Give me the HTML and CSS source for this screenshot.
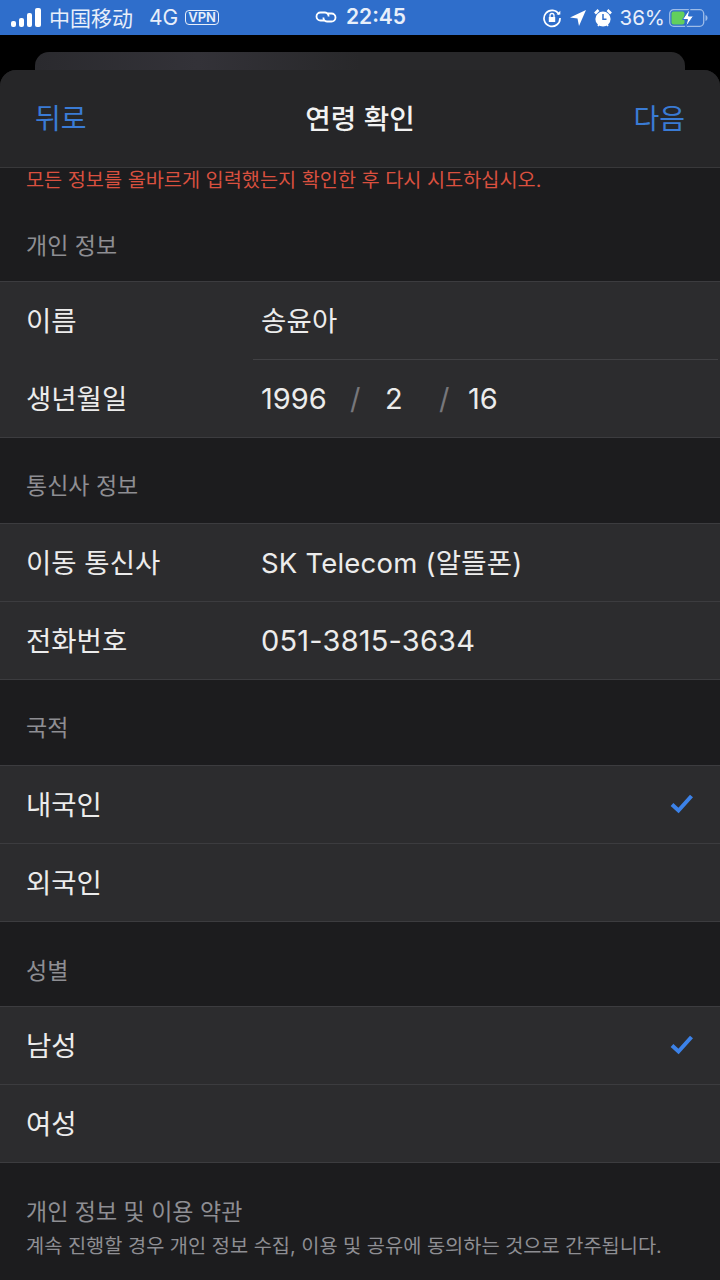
FILE: index.html
```html
<!DOCTYPE html>
<html lang="ko">
<head>
	<meta charset="UTF-8">
	<title>연령 확인</title>
	<link rel="stylesheet" href="styles.css">
</head>
<body>
	<div class="status">
		<div class="status_left">
			<svg class="signal" width="32" height="20" viewBox="0 0 32 20"><rect x="0" y="13" width="5" height="6" rx="2" fill="#fff"/><rect x="8" y="10" width="5" height="9" rx="2" fill="#fff"/><rect x="16" y="5" width="5" height="14" rx="2" fill="#fff"/><rect x="24" y="0" width="6" height="19" rx="2" fill="#fff"/></svg>
			<span class="carrier">中国移动</span>
			<span class="net">4G</span>
			<span class="vpn">VPN</span>
		</div>
		<div class="status_mid">
			<svg width="24" height="14" viewBox="0 0 24 14" fill="none" stroke="#fff" stroke-width="1.8"><path d="M10 10.500H6.500a4 4 0 0 1 0-8H11a4 4 0 0 1 3.600 4"/><path d="M14 3.500h3.500a4 4 0 0 1 0 8H13a4 4 0 0 1-3.600-4"/></svg>
			<span class="clock">22:45</span>
		</div>
		<div class="status_right">
			<svg width="20" height="20" viewBox="0 0 20 20" fill="none" stroke="#fff" stroke-width="1.700"><path d="M17 6.500A8 8 0 1 0 18 10"/><path d="M14.500 6.500h3.800V2.800z" fill="#fff" stroke="none"/><rect x="6.800" y="9" width="6.400" height="5" fill="#fff" stroke="none"/><path d="M8 9V7.500a2 2 0 0 1 4 0V9" stroke-width="1.300"/></svg>
			<svg width="18" height="18" viewBox="0 0 18 18"><path d="M17 1 1 8.500l7.500 1L10 17z" fill="#fff"/></svg>
			<svg width="18" height="20" viewBox="0 0 18 20"><circle cx="9" cy="11" r="7.600" fill="#fff"/><path d="M9 6v5.200h3.500" fill="none" stroke="#2f6ecb" stroke-width="1.500"/><path d="M1 5.500 4.500 2M17 5.500 13.500 2" stroke="#fff" stroke-width="2.600"/><path d="M4 18l1.500-2M14 18l-1.500-2" stroke="#fff" stroke-width="1.600"/></svg>
			<span class="percent">36%</span>
			<svg width="42" height="20" viewBox="0 0 42 20"><rect x="0.700" y="1.700" width="34" height="16.600" rx="4" fill="none" stroke="#9dbce8" stroke-width="1.300"/><rect x="2.500" y="3.500" width="13" height="13" rx="2" fill="#62cf5c"/><path d="M36.500 7v6c1.200-.4 2-1.500 2-3s-.8-2.600-2-3z" fill="#9dbce8"/><path d="M21 0.500 13.500 11.500h5l-2 8 8-11.500h-5z" fill="#fff" stroke="#2f6ecb" stroke-width="1"/></svg>
		</div>
	</div>

	<div class="stage">
		<div class="back_card"></div>
		<div class="sheet">
			<div class="nav">
				<span class="nav_link">뒤로</span>
				<span class="nav_title">연령 확인</span>
				<span class="nav_link">다음</span>
			</div>

			<p class="error">모든 정보를 올바르게 입력했는지 확인한 후 다시 시도하십시오.</p>

			<h2 class="sec_title sec_first">개인 정보</h2>
			<div class="group">
				<div class="row row_inset">
					<span class="row_label">이름</span>
					<span class="row_value">송윤아</span>
				</div>
				<div class="row">
					<span class="row_label">생년월일</span>
					<div class="date">
						<span class="date_y">1996</span>
						<span class="date_sep">/</span>
						<span class="date_m">2</span>
						<span class="date_sep date_sep2">/</span>
						<span class="date_d">16</span>
					</div>
				</div>
			</div>

			<h2 class="sec_title">통신사 정보</h2>
			<div class="group">
				<div class="row row_line">
					<span class="row_label">이동 통신사</span>
					<span class="row_value">SK Telecom (알뜰폰)</span>
				</div>
				<div class="row">
					<span class="row_label">전화번호</span>
					<span class="row_phone">051-3815-3634</span>
				</div>
			</div>

			<h2 class="sec_title">국적</h2>
			<div class="group">
				<div class="row row_line">
					<span class="row_label">내국인</span>
					<svg class="check" width="26" height="22" viewBox="0 0 26 22"><path d="M3 11.500l6.500 6L22.500 3" fill="none" stroke="#3c82e8" stroke-width="4"/></svg>
				</div>
				<div class="row">
					<span class="row_label">외국인</span>
				</div>
			</div>

			<h2 class="sec_title sec_last">성별</h2>
			<div class="group">
				<div class="row row_line">
					<span class="row_label">남성</span>
					<svg class="check" width="26" height="22" viewBox="0 0 26 22"><path d="M3 11.500l6.500 6L22.500 3" fill="none" stroke="#3c82e8" stroke-width="4"/></svg>
				</div>
				<div class="row">
					<span class="row_label">여성</span>
				</div>
			</div>

			<div class="footer">
				<p class="footer_title">개인 정보 및 이용 약관</p>
				<p class="footer_text">계속 진행할 경우 개인 정보 수집, 이용 및 공유에 동의하는 것으로 간주됩니다.</p>
			</div>
		</div>
	</div>
</body>
</html>
```

FILE: styles.css
```css
body,div,p,h2{margin:0;padding:0}

html,body{
	width: 720px;
	height: 1280px;
	overflow: hidden;
}
body{
	background-color: #000;
	color: #fff;
	font-family: "Inter","Noto Sans CJK KR",sans-serif;
}

/* status bar */
.status{
	height: 35px;
	background-color: #2f6ecb;
	display: flex;
	align-items: center;
	justify-content: space-between;
	position: relative;
	font-size: 21px;
	color: #e8effa;
}
.status_left{
	display: flex;
	align-items: center;
	padding-left: 11px;
}
.signal{
	margin-right: 6px;
}
.carrier{
	font-family: "Noto Sans CJK SC",sans-serif;
	font-size: 21px;
	margin: -2px 16px 0 0;
}
.net{
	font-size: 21px;
	margin-right: 7px;
}
.vpn{
	border: 1.500px solid #e8effa;
	border-radius: 4px;
	font-size: 13px;
	font-weight: 600;
	line-height: 13px;
	padding: 0 2px;
}
.status_mid{
	display: flex;
	align-items: center;
	gap: 8px;
	position: absolute;
	left: 314px;
	top: 4px;
}
.clock{
	font-weight: 600;
	font-size: 21px;
}
.status_right{
	display: flex;
	align-items: center;
	gap: 7px;
	padding-right: 9px;
}
.percent{
	font-size: 20.500px;
	margin: -1px -3px 0 0;
}

/* stacked sheets */
.stage{
	padding-top: 17px;
}
.back_card{
	height: 18px;
	margin: 0 35px;
	background: linear-gradient(90deg,#2a2a2e,#333238 25%,#28282a 50%,#28282a);
	border-radius: 14px 14px 0 0;
}
.sheet{
	height: 1210px;
	background-color: #1c1c1e;
	border-radius: 16px 16px 0 0;
	overflow: hidden;
}
.nav{
	height: 98px;
	background-color: #262628;
	border-bottom: 1px solid #38383a;
	box-sizing: border-box;
	display: flex;
	align-items: center;
	justify-content: space-between;
	padding: 0 35px 4px 35px;
}
.nav_link{
	font-size: 28px;
	color: #3a7bd5;
}
.nav_title{
	font-size: 27.700px;
	font-weight: 500;
	color: #f2f2f2;
}

.error{
	font-size: 19.700px;
	line-height: 24px;
	color: #d9503f;
	padding-left: 26px;
}

.sec_title{
	font-size: 23px;
	font-weight: 400;
	line-height: 30px;
	color: #8e8e93;
	padding: 33px 26px 22px;
}
.sec_first{
	padding-top: 39px;
	padding-bottom: 20px;
}
.sec_last{
	padding-top: 34px;
	padding-bottom: 20px;
}

.group{
	background-color: #2c2c2e;
	border-top: 1px solid #3c3c3f;
	border-bottom: 1px solid #3c3c3f;
}
.row{
	height: 77px;
	display: flex;
	align-items: center;
	padding-left: 26px;
	position: relative;
	font-size: 27px;
	color: #ececec;
}
.row_line{
	height: 78px;
	box-sizing: border-box;
	border-bottom: 1px solid #3c3c3f;
}
.row_inset{
	height: 78px;
}
.row_inset::after{
	content: "";
	position: absolute;
	left: 253px;
	right: 2px;
	bottom: 0;
	height: 1px;
	background-color: #414144;
}
.row_label{
	width: 235px;
	flex-shrink: 0;
	font-size: 27.500px;
	margin-top: -4px;
}
.row_value{
	font-size: 27.500px;
	letter-spacing: 0.200px;
	margin-top: -4px;
}
.row_phone{
	font-size: 29px;
	letter-spacing: 0.200px;
}
.date{
	display: flex;
	font-size: 29px;
}
.date_y{
	width: 89px;
}
.date_m{
	width: 54px;
	padding-left: 0;
}
.date_sep{
	color: #77777b;
	width: 35px;
}
.date_sep2{
	width: 29px;
}
.check{
	position: absolute;
	right: 25px;
	top: 27px;
}

.footer{
	padding: 34px 26px 0;
}
.footer_title{
	font-size: 23px;
	line-height: 30px;
	color: #8e8e93;
}
.footer_text{
	font-size: 19.750px;
	line-height: 30px;
	margin-top: 4px;
	color: #8e8e93;
}
```
